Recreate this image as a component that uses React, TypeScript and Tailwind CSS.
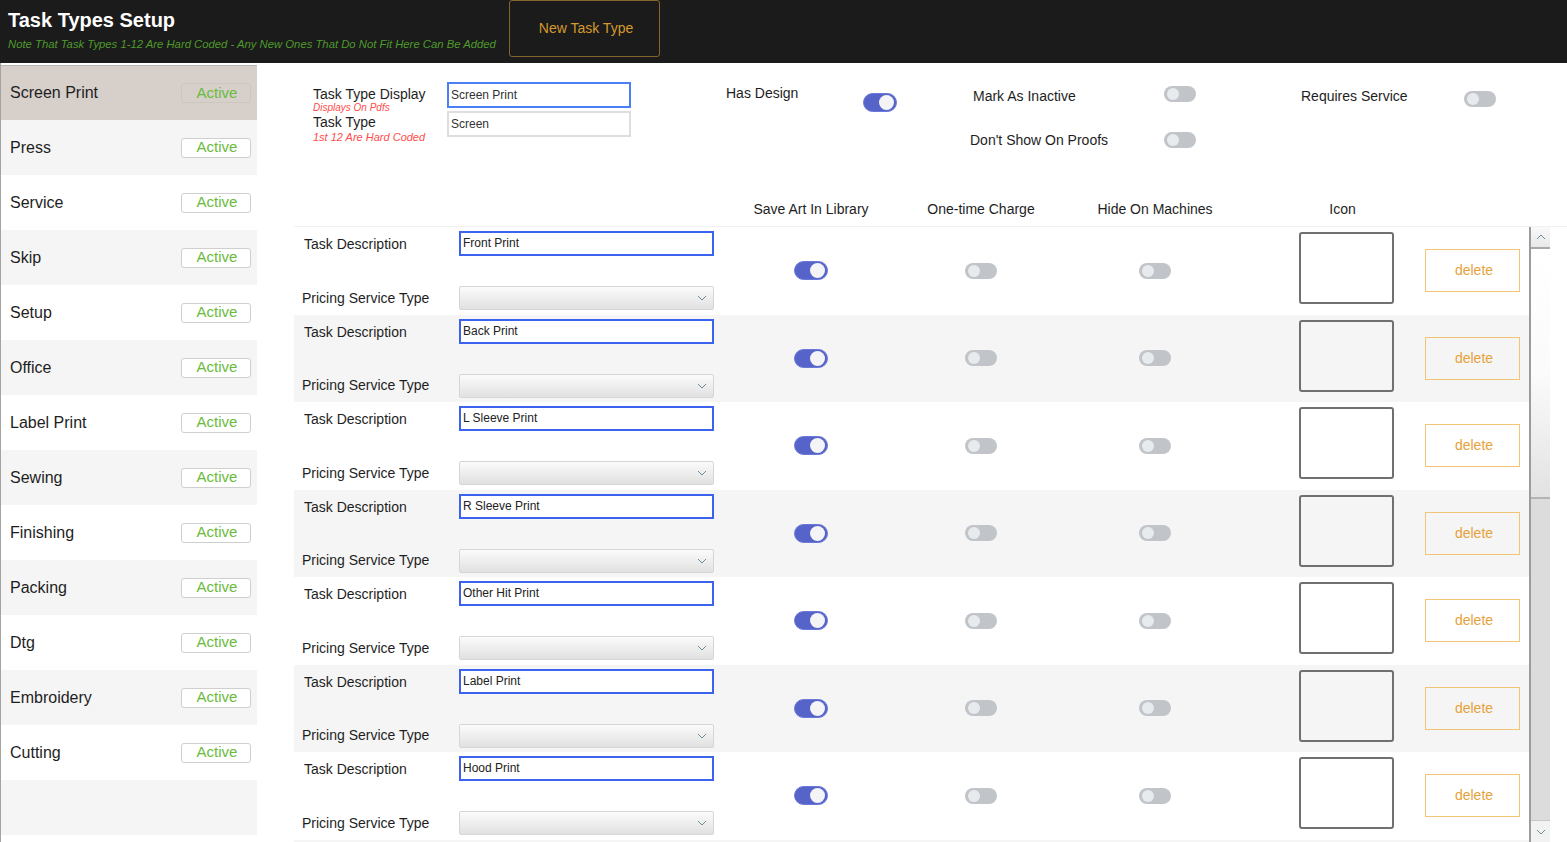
import React from 'react';

const TASK_TYPES = [
  'Screen Print',
  'Press',
  'Service',
  'Skip',
  'Setup',
  'Office',
  'Label Print',
  'Sewing',
  'Finishing',
  'Packing',
  'Dtg',
  'Embroidery',
  'Cutting',
];

const DESCRIPTIONS = [
  'Front Print',
  'Back Print',
  'L Sleeve Print',
  'R Sleeve Print',
  'Other Hit Print',
  'Label Print',
  'Hood Print',
];

function Toggle({ on }: { on?: boolean }) {
  if (on) {
    return (
      <div className="relative h-[19px] w-[34px] shrink-0 rounded-full border border-[#6b78d6] bg-[#5664c9]">
        <div className="absolute right-[2px] top-[1px] h-[15px] w-[15px] rounded-full bg-[#f4f4f6]" />
      </div>
    );
  }
  return (
    <div className="relative h-[16px] w-[32px] shrink-0 rounded-full bg-[#c1c5c9]">
      <div className="absolute left-[3px] top-[2px] h-[12px] w-[12px] rounded-full bg-[#e8ebed]" />
    </div>
  );
}

function Chevron({ up }: { up?: boolean }) {
  return (
    <svg width="10" height="6" viewBox="0 0 10 6" className="shrink-0">
      <path
        d={up ? 'M1 5 L5 1 L9 5' : 'M1 1 L5 5 L9 1'}
        fill="none"
        stroke="#6d8c99"
        strokeWidth="1"
      />
    </svg>
  );
}

function Sidebar() {
  return (
    <div className="flex w-[257px] shrink-0 flex-col border-l border-[#a3a3a3] pt-[2px]">
      {TASK_TYPES.map((name, i) => {
        const selected = i === 0;
        const bg = selected ? 'bg-[#d6cfca] border-t border-[#b9b4b0]' : i % 2 === 1 ? 'bg-[#f5f5f5]' : 'bg-white';
        return (
          <div key={name} className={`flex h-[55px] items-center justify-between pl-[9px] pr-[6px] ${bg}`}>
            <span className="text-[16px] text-[#1e1e1e]">{name}</span>
            <div
              className={
                selected
                  ? 'flex h-[20px] w-[70px] items-center justify-center rounded-[3px] border border-[#cdc7c2] pl-[2px] text-[15px] text-[#6abb3c]'
                  : 'flex h-[20px] w-[70px] items-center justify-center rounded-[3px] border border-[#cfcfcf] bg-white pl-[2px] text-[15px] text-[#6abb3c]'
              }
            >
              Active
            </div>
          </div>
        );
      })}
      <div className="h-[55px] bg-[#f5f5f5]" />
    </div>
  );
}

function TopSection() {
  return (
    <div className="flex h-[163px] flex-col">
      <div className="flex items-start pt-[19px]">
        {/* Display / type inputs */}
        <div className="ml-[19px] mt-[4px] flex w-[134px] flex-col">
          <span className="text-[14px] leading-[16px] text-[#1e1e1e]">Task Type Display</span>
          <span className="text-[10px] italic leading-[12px] text-[#ff4b4b]">Displays On Pdfs</span>
          <span className="text-[14px] leading-[16px] text-[#1e1e1e]">Task Type</span>
          <span className="text-[11px] italic leading-[14px] text-[#ff4b4b]">1st 12 Are Hard Coded</span>
        </div>
        <div className="flex w-[184px] flex-col gap-[3px]">
          <div className="flex h-[26px] items-center border-2 border-[#4a7ff5] px-[2px] text-[12px] text-[#333]">
            Screen Print
          </div>
          <div className="flex h-[26px] items-center border-2 border-[#dedede] px-[2px] text-[12px] text-[#333]">
            Screen
          </div>
        </div>

        {/* Has design */}
        <div className="ml-[95px] mt-[3px] w-[137px] text-[14px] leading-[16px] text-[#1e1e1e]">Has Design</div>
        <div className="mt-[11px]">
          <Toggle on />
        </div>

        {/* Inactive / proofs */}
        <div className="ml-[73px] mt-[4px] flex flex-col gap-[28px]">
          <div className="flex items-start">
            <div className="mt-[2px] w-[194px] pl-[3px] text-[14px] leading-[16px] text-[#1e1e1e]">Mark As Inactive</div>
            <Toggle />
          </div>
          <div className="flex items-start">
            <div className="w-[194px] text-[14px] leading-[16px] text-[#1e1e1e]">Don't Show On Proofs</div>
            <Toggle />
          </div>
        </div>

        {/* Requires service */}
        <div className="ml-[105px] mt-[6px] w-[163px] text-[14px] leading-[16px] text-[#1e1e1e]">Requires Service</div>
        <div className="mt-[9px]">
          <Toggle />
        </div>
      </div>

      <div className="mb-[7px] mt-auto flex h-[20px] items-center text-[14px] text-[#1e1e1e]">
        <div className="w-[432px]" />
        <div className="w-[170px] text-center">Save Art In Library</div>
        <div className="w-[170px] text-center">One-time Charge</div>
        <div className="w-[178px] text-center">Hide On Machines</div>
        <div className="ml-[55px] w-[87px] text-center">Icon</div>
      </div>
    </div>
  );
}

function TaskRow({ desc, index }: { desc: string; index: number }) {
  const bg = index % 2 === 1 ? 'bg-[#f5f5f5]' : 'bg-white';
  return (
    <div className={`flex h-[87.5px] shrink-0 items-center ${bg}`}>
      <div className="flex w-[432px] flex-col self-start pt-[4px]">
        <div className="flex h-[25px] items-center">
          <span className="w-[165px] pl-[10px] pt-[2px] text-[14px] text-[#1e1e1e]">Task Description</span>
          <div className="flex h-[25px] w-[255px] items-start border-2 border-[#3b63f0] bg-white px-[2px] pt-[1px] text-[12px] text-[#222]">
            {desc}
          </div>
        </div>
        <div className="mt-[30px] flex h-[24px] items-center">
          <span className="w-[165px] pl-[8px] text-[14px] text-[#1e1e1e]">Pricing Service Type</span>
          <div className="flex h-[24px] w-[255px] items-center justify-end rounded-[2px] border border-[#d6d6d6] bg-gradient-to-b from-[#fbfbfb] to-[#e1e1e1] pr-[6px]">
            <Chevron />
          </div>
        </div>
      </div>
      <div className="flex w-[170px] justify-center">
        <Toggle on />
      </div>
      <div className="flex w-[170px] justify-center">
        <Toggle />
      </div>
      <div className="flex w-[178px] justify-center">
        <Toggle />
      </div>
      <div className="ml-[55px] mt-[5px] h-[72px] w-[95px] self-start rounded-[3px] border-2 border-[#707070]" />
      <div className="ml-[31px] flex h-[43px] w-[95px] items-center justify-center border border-[#f0c574] pl-[3px] text-[14px] text-[#e6a23a]">
        delete
      </div>
    </div>
  );
}

function ScrollBar() {
  return (
    <div className="flex w-[21px] shrink-0 flex-col border-l-2 border-[#9c9c9c] bg-[#dcdcdc]">
      <div className="flex h-[20px] shrink-0 items-center justify-center bg-gradient-to-b from-[#fafafa] to-[#e8e8e8]">
        <Chevron up />
      </div>
      <div className="h-[2px] shrink-0 bg-[#a9a9a9]" />
      <div className="h-[248px] shrink-0 bg-gradient-to-b from-[#ffffff] via-[#fbfbfb] to-[#e2e2e2]" />
      <div className="h-[2px] shrink-0 bg-[#b4b4b4]" />
      <div className="flex-1" />
      <div className="flex h-[22px] shrink-0 items-center justify-center border-t border-[#c8c8c8] bg-[#f2f2f2]">
        <Chevron />
      </div>
    </div>
  );
}

export default function App() {
  return (
    <div
      className="flex h-[842px] w-full flex-col overflow-hidden bg-white"
      style={{ fontFamily: '"Liberation Sans", Arial, sans-serif' }}
    >
      {/* Header */}
      <div className="flex h-[63px] shrink-0 items-start bg-[#1b1b1b]">
        <div className="flex w-[509px] flex-col pl-[8px] pt-[8px]">
          <span className="text-[20px] font-bold leading-[24px] text-white">Task Types Setup</span>
          <span className="mt-[6px] text-[11.3px] italic leading-[13px] text-[#4e9a2c]">
            Note That Task Types 1-12 Are Hard Coded - Any New Ones That Do Not Fit Here Can Be Added
          </span>
        </div>
        <button className="flex h-[57px] w-[151px] items-center justify-center rounded-[3px] border border-[#86652a] pl-[3px] text-[14px] text-[#d49a2c]">
          New Task Type
        </button>
      </div>

      <div className="flex min-h-0 flex-1">
        <Sidebar />
        <div className="ml-[37px] flex min-w-0 flex-1 flex-col">
          <TopSection />
          <div className="flex min-h-0 flex-1 border-t border-[#f0f0f0]">
            <div className="flex w-[1235px] shrink-0 flex-col overflow-hidden">
              {DESCRIPTIONS.map((d, i) => (
                <TaskRow key={i} desc={d} index={i} />
              ))}
              <div className="flex-1 bg-[#f5f5f5]" />
            </div>
            <ScrollBar />
          </div>
        </div>
      </div>
    </div>
  );
}
